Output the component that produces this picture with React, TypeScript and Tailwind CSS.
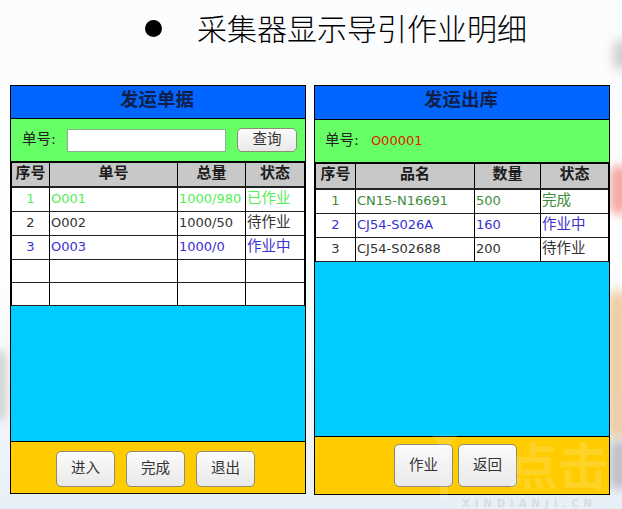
const font = "font-['DejaVu_Sans','Noto_Sans_CJK_SC',sans-serif]";

type Row = { c: string[]; color: string };

function Cell({ w, children, center, bold, color, cjk }: { w: string; children?: string; center?: boolean; bold?: boolean; color?: string; cjk?: boolean }) {
  return (
    <div className={`${w} h-full shrink-0 border-r border-black last:border-r-0 flex items-center overflow-hidden whitespace-nowrap pb-[3px] ${center ? "justify-center" : "pl-[1px]"} ${bold ? "font-bold text-[15px] text-[#1c1c1c]" : ""} ${cjk ? "text-[14.5px]" : ""} ${color ?? ""}`}>
      {children}
    </div>
  );
}

function Table({ widths, head, rows, headH, rowHs }: { widths: string[]; head: string[]; rows: Row[]; headH: string; rowHs: string[] }) {
  return (
    <div className="flex flex-col border-t-2 border-x border-black text-[13px] leading-none text-[#333] bg-white">
      <div className={`flex ${headH} bg-[#c8c8c8] border-b-2 border-[#222]`}>
        {head.map((h, i) => (
          <Cell key={h + i} w={widths[i]} center bold>{h}</Cell>
        ))}
      </div>
      {rowHs.map((rh, r) => {
        const row = rows[r];
        return (
          <div key={r} className={`flex ${rh} border-b border-[#222]`}>
            {widths.map((w, i) => (
              <Cell key={i} w={w} center={i === 0} cjk={i === 3} color={row?.color}>{row?.c[i]}</Cell>
            ))}
          </div>
        );
      })}
    </div>
  );
}

function Btn({ children, cls }: { children: string; cls: string }) {
  return (
    <div className={`${cls} flex items-center justify-center rounded-[5px] border border-[#8f8a70] bg-gradient-to-b from-[#fbfbfb] to-[#e9e9e9] text-[14.5px] text-[#333]`}>
      {children}
    </div>
  );
}

export default function App() {
  return (
    <div className={`relative w-[622px] h-[509px] overflow-hidden ${font} bg-gradient-to-b from-[#fbfcfd] via-white to-[#e8f0f7]`}>
      <div className="absolute right-[-8px] top-[40px] w-[16px] h-[30px] rounded-full bg-[#c8c8c8] blur-[6px]" />
      <div className="absolute right-[-6px] top-[165px] w-[18px] h-[50px] rounded-full bg-[#f4a8a0] blur-[5px]" />
      <div className="absolute right-[-6px] top-[290px] w-[20px] h-[150px] rounded-full bg-[#eec9a0] blur-[6px]" />
      <div className="absolute right-[-6px] top-[440px] w-[18px] h-[50px] rounded-full bg-[#bfbfc4] blur-[5px]" />
      <div className="absolute left-[-6px] top-[350px] w-[12px] h-[70px] rounded-full bg-[#cfcfcf] blur-[5px]" />

      <div className="relative h-[85px] flex items-start pl-[145px] pt-[11px]">
        <span className="mt-[9px] w-[17px] h-[17px] rounded-full bg-black" />
        <span className="ml-[35px] -mt-[2px] text-[30px] leading-[36px] font-light text-black font-['Noto_Sans_CJK_SC',sans-serif]">采集器显示导引作业明细</span>
      </div>

      <div className="relative flex items-start pl-[10px] gap-[8px]">
        <div className="w-[296px] h-[409px] border border-black flex flex-col">
          <div className="h-[33px] bg-[#0066ff] border-b border-black flex items-center justify-center pb-[5px] pr-[2px] font-bold text-[18.5px] text-[#10204a]">发运单据</div>
          <div className="h-[42px] bg-[#66ff66] flex items-center text-[14.5px] text-[#222]">
            <span className="ml-[11px]">单号:</span>
            <div className="ml-[11px] w-[159px] h-[23px] bg-white border border-[#8fae8f]" />
            <Btn cls="ml-[11px] w-[60px] h-[24px]">查询</Btn>
          </div>
          <Table
            widths={["w-[38px]", "w-[128px]", "w-[68px]", "w-[58px]"]}
            head={["序号", "单号", "总量", "状态"]}
            headH="h-[25px]"
            rowHs={["h-[24px]", "h-[24px]", "h-[24px]", "h-[23px]", "h-[23px]"]}
            rows={[
              { c: ["1", "O001", "1000/980", "已作业"], color: "text-[#55ee55]" },
              { c: ["2", "O002", "1000/50", "待作业"], color: "text-[#333]" },
              { c: ["3", "O003", "1000/0", "作业中"], color: "text-[#3a2fd0]" },
            ]}
          />
          <div className="flex-1 bg-[#00ccff] border-b border-black" />
          <div className="h-[51px] bg-[#ffcc00] flex items-start pl-[45px] pt-[9px] gap-[11px]">
            <Btn cls="w-[59px] h-[36px]">进入</Btn>
            <Btn cls="w-[59px] h-[36px]">完成</Btn>
            <Btn cls="w-[59px] h-[36px]">退出</Btn>
          </div>
        </div>

        <div className="w-[296px] h-[410px] border border-black flex flex-col">
          <div className="h-[34px] bg-[#0066ff] border-b border-black flex items-center justify-center pb-[5px] pr-[2px] font-bold text-[18.5px] text-[#10204a]">发运出库</div>
          <div className="h-[42px] bg-[#66ff66] flex items-center text-[14.5px] text-[#222]">
            <span className="ml-[10px]">单号:</span>
            <span className="ml-[12px] text-[13px] text-[#e02000]">O00001</span>
          </div>
          <Table
            widths={["w-[40px]", "w-[119px]", "w-[66px]", "w-[67px]"]}
            head={["序号", "品名", "数量", "状态"]}
            headH="h-[26px]"
            rowHs={["h-[24px]", "h-[24px]", "h-[24px]"]}
            rows={[
              { c: ["1", "CN15-N16691", "500", "完成"], color: "text-[#3c8c3c]" },
              { c: ["2", "CJ54-S026A", "160", "作业中"], color: "text-[#3a2fd0]" },
              { c: ["3", "CJ54-S02688", "200", "待作业"], color: "text-[#333]" },
            ]}
          />
          <div className="flex-1 bg-[#00ccff] border-b border-black" />
          <div className="h-[57px] bg-[#ffcc00] flex items-start pl-[79px] pt-[7px] gap-[5px]">
            <Btn cls="w-[59px] h-[43px]">作业</Btn>
            <Btn cls="w-[59px] h-[43px]">返回</Btn>
          </div>
        </div>
      </div>

      <svg className="absolute left-[430px] top-[433px] w-[32px] h-[68px]" viewBox="0 0 32 68" fill="#ffffff" fillOpacity="0.14">
        <path d="M2 2 L28 2 L18 14 L18 66 L10 66 L10 14 Z" />
      </svg>
      <div className="absolute left-[508px] top-[438px] text-[50px] leading-[50px] font-bold text-white/15 whitespace-nowrap font-['Noto_Sans_CJK_SC',sans-serif]">点击</div>
      <div className="absolute left-[462px] top-[499px] text-[10px] leading-[10px] font-bold tracking-[5px] text-[#c8c8c8]/50 whitespace-nowrap">XINDIANJI.CN</div>
    </div>
  );
}
